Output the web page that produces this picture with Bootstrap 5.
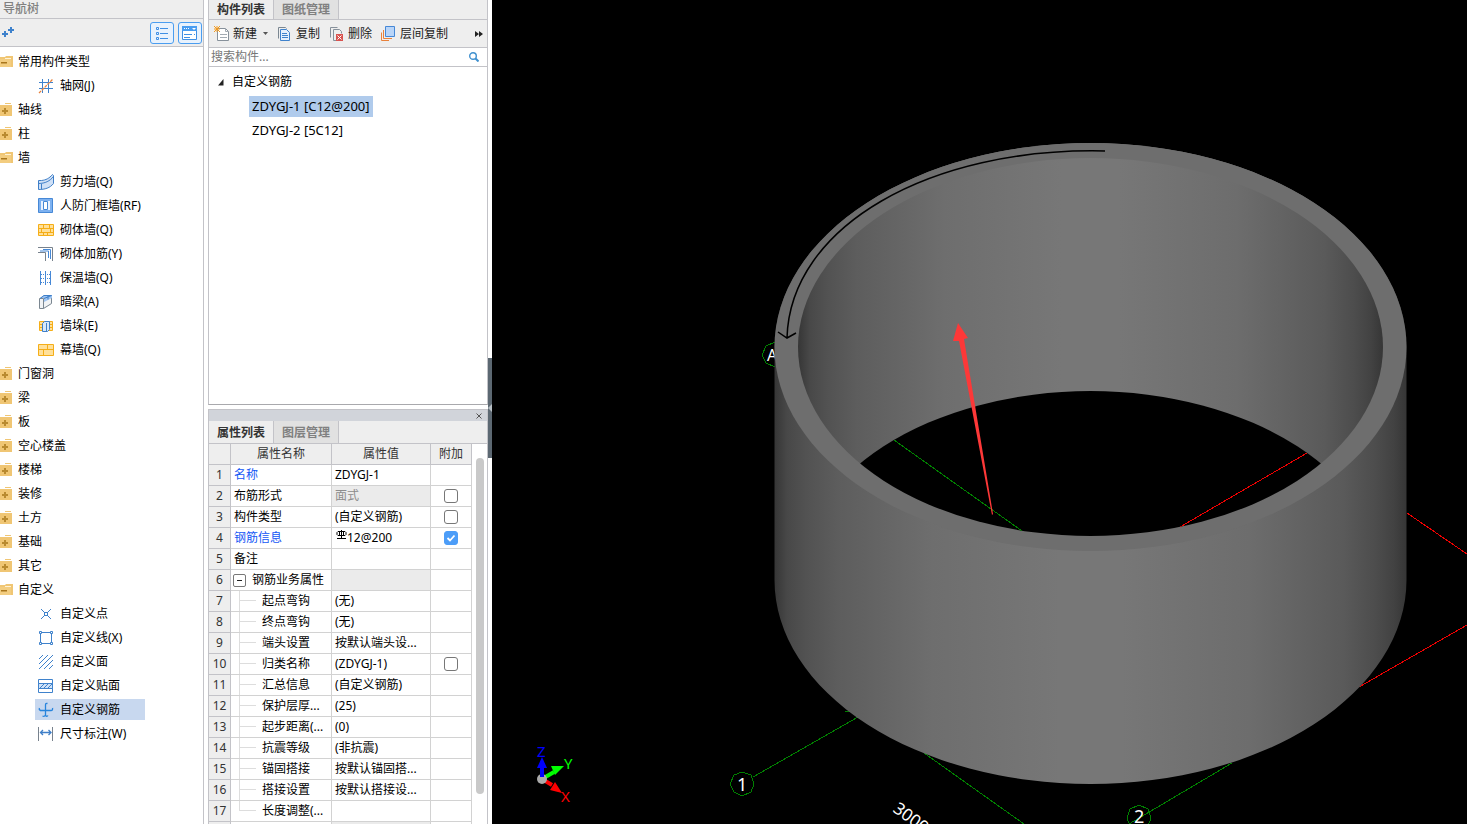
<!DOCTYPE html>
<html lang="zh-CN">
<head>
<meta charset="utf-8">
<meta name="viewport" content="width=device-width, initial-scale=1">
<title>自定义钢筋</title>
<link href="https://cdn.jsdelivr.net/npm/bootstrap@5.3.0/dist/css/bootstrap.min.css" rel="stylesheet">
<style>
:root { --line: #c3c3c8; --bar: #eee; }
body { font: 12px/20px "Noto Sans", "Noto Sans CJK SC", sans-serif; color: #000; background: #fff; }
svg { flex: none; }
a { color: inherit; text-decoration: none; }
button { font: inherit; }
.nav-panel { width: 204px; border-right: 1px solid var(--line); }
.mid-panel { width: 280px; }
.mid-panel > * { flex-shrink: 0; }
.bar { background: var(--bar); border-bottom: 1px solid var(--line); }
.panel-title { height: 19px; line-height: 17px; color: #808080; font-weight: 500; padding-left: 3px; }
.nav-tools { height: 28px; padding-right: 1px; }
.tool-toggle { width: 24px; height: 22px; border: 1px solid #4a9df0; border-radius: 3px; background: #e8f2fd; padding: 0; }
.tree-row { height: 24px; white-space: nowrap; }
.tree-row svg { display: block; }
.leaf { margin-left: 35px; height: 21px; padding: 0 25px 0 3px; gap: 6px; }
.leaf.active { background: #c8d8ef; }
.group { gap: 5px; height: 21px; }
.panel-tabs { background: var(--bar); border-bottom: 1px solid var(--line); }
.panel-tab { width: 65px; border: 0; border-right: 1px solid var(--line); padding: 0; background: #e1e1e1; color: #808080; font-weight: 700; }
.panel-tab.active { background: var(--bar); color: #333; }
.tabs-top { height: 20px; line-height: 17px; }
.tabs-low { height: 23px; line-height: 21px; }
.comp-tools { height: 28px; padding-left: 5px; gap: 9px; }
.tool-btn { border: 0; background: none; padding: 0; color: #222; gap: 3px; }
.search-row { height: 19px; border-bottom: 1px solid var(--line); }
.search-row input { border: 0; outline: 0; padding: 0 2px; font: inherit; height: 18px; width: 250px; }
.search-row input::placeholder { color: #777; opacity: 1; }
.boxed { border-left: 1px solid var(--line); border-right: 1px solid var(--line); }
.comp-list { height: 338px; border-bottom: 1px solid #a9a9ad; padding-top: 3px; }
.comp-item { margin-left: 40px; padding: 0 3px; height: 21px; font-size: 13px; }
.comp-item.active { background: #b0cbec; }
.dock-bar { height: 12px; margin-top: 4px; background: #d1d4da; border-top: 1px solid var(--line); }
.dock-bar button { border: 0; background: none; padding: 0; width: 16px; height: 11px; }
.props-box { flex: 1 1 0; min-height: 0; }
.props { width: 263px; table-layout: fixed; border-collapse: separate; border-spacing: 0; }
.props th, .props td { height: 21px; line-height: 20px; padding: 0 3px; font-weight: 400; border-right: 1px solid #d2d2d2; border-bottom: 1px solid #d2d2d2; overflow: hidden; white-space: nowrap; vertical-align: middle; }
.props thead th, .props tbody th { background: var(--bar); color: #333; text-align: center; border-color: var(--line); padding: 0; }
.props .key { color: #1457f5; }
.props .off { background: #ebebeb; color: #8c8c8c; }
.props .tick { text-align: center; }
.props input { appearance: none; display: block; margin: 0 auto; width: 14px; height: 14px; border: 1px solid #777; border-radius: 3px; background: #fff; }
.props input:checked { border-color: #4c9df8; background: #4c9df8 url("data:image/svg+xml,%3Csvg xmlns='http://www.w3.org/2000/svg' viewBox='0 0 12 12'%3E%3Cpath d='M2.5 6l2.5 2.5 4.500-5' fill='none' stroke='white' stroke-width='1.800'/%3E%3C/svg%3E"); }
.props .sub { padding: 0 0 0 31px; background: linear-gradient(#ddd, #ddd) 8px 0 / 1px 100% no-repeat, linear-gradient(#ddd, #ddd) 8px 9px / 17px 1px no-repeat; }
.props .sub.end { background-size: 1px 10px, 17px 1px; }
.props .parent { padding-left: 2px; }
.fold-row { gap: 6px; }
.fold { width: 13px; height: 13px; border: 1px solid #777; border-radius: 2px; background: #fff; padding: 0; }
.fold::before { content: ""; display: block; width: 5px; height: 1px; margin: 0 auto; background: #222; }
.scroll-rail { width: 8px; margin: 14px 3px 0 0; }
.scroll-thumb { height: 336px; border-radius: 4px; background: #c9c9c9; }
.splitter { width: 4px; }
.splitter-grip { height: 100px; background: #5c6872; }
.view-area { background: #000; min-width: 0; }
</style>
</head>
<body>
<svg class="d-none" xmlns="http://www.w3.org/2000/svg">
  <symbol id="f-open" viewBox="0 0 13 14"><path d="M0 2h5l1-1h7v11H0z" fill="#f0c674"/><path d="M5 3h6v2H5z" fill="#fff3d6"/><path d="M0 4h11v8H0z" fill="#f3cd80"/><path d="M1 7h6v1.500H1z" fill="#a9761c"/></symbol>
  <symbol id="f-shut" viewBox="0 0 13 14"><path d="M5 0h6v1H5zM0 2h12v11H0z" fill="#f0c674"/><path d="M5 5v6M2 8h6" stroke="#b98a30" stroke-width="2"/></symbol>
  <symbol id="i-grid" viewBox="0 0 16 16"><path d="M4.500 1v14M10.500 1v14M1 4.500h14M1 10.500h14" stroke="#3f82cc" fill="none"/><path d="M1 15L15 1" stroke="#e8813a" stroke-width="1.300" stroke-dasharray="3 1"/></symbol>
  <symbol id="i-shear" viewBox="0 0 16 16"><path d="M.5 6.500C6 7 10 5 14.500.5l1 1v8C12 14 7 15.500.5 15.500z" fill="#cfe0f6"/><path d="M3.500 6.500h-3v9C7 15.500 12 14 15.500 9.500v-8l-1-1C11 4.500 8 6 3.500 6.500zM.5 9.500C7 9.500 12 7 15.500 2.500M3.500 10v5" fill="none" stroke="#3f7fc8"/></symbol>
  <symbol id="i-frame" viewBox="0 0 16 16"><path d="M.5.5h14v14H.5z" fill="#7db1f0" stroke="#4688d6"/><path d="M3 3h9v9H3z" fill="#e8f2ff"/><path d="M5.500 3.500h4v8h-4z" fill="#fff" stroke="#4688d6"/></symbol>
  <symbol id="i-brick" viewBox="0 0 16 16"><path d="M.5 2.500h15v11H.5z" fill="#ffe09a" stroke="#f5ae18"/><path d="M0 6.500h16M0 10.500h16M5.500 2v4M11.500 2v4M3.500 7v3M12.500 7v3M5.500 10v4M9.500 10v4" stroke="#f5ae18"/></symbol>
  <symbol id="i-rebar" viewBox="0 0 16 16"><path d="M0 1.500h14.500V15M0 6.500h7.500V15" fill="none" stroke="#78828d"/><path d="M5 3.500h7.500V13M2 5h8.500V12" fill="none" stroke="#4688d6"/></symbol>
  <symbol id="i-insul" viewBox="0 0 16 16"><path d="M2.500 1v14M7.500 1v14M12.500 1v14" stroke="#4688d6"/><path d="M3 4.500h10M3 8.500h10M3 12.500h10" stroke="#4688d6" stroke-dasharray="1 1"/></symbol>
  <symbol id="i-beam" viewBox="0 0 16 16"><path d="M1.500 4.500l4-3h8v9l-7 4h-5z" fill="#f1f3f5"/><path d="M1.500 4.500h4v10h-4zM5.500 14.500l8-5v-8" fill="none" stroke="#7b8791"/><path d="M2 4l4-3h8v3l-8 4V4z" fill="#9fc5f2"/><path d="M2 4.500l4-3h7.500L6 4.500M10 1.500v4" fill="none" stroke="#3f7fc8"/></symbol>
  <symbol id="i-pier" viewBox="0 0 16 16"><path d="M1.500 3.500h13v9h-13z" fill="#ffe09a" stroke="#f5ae18"/><path d="M1 6.500h14M1 9.500h14" stroke="#f5ae18"/><path d="M4.500 5.500l2-2h5v8l-2 2h-5z" fill="#d7e8fc" stroke="#3f7fc8"/><path d="M8.500 5v8" stroke="#3f7fc8"/></symbol>
  <symbol id="i-curtain" viewBox="0 0 16 16"><path d="M.5 2.500h15v11H.5z" fill="#ffe09a" stroke="#f5ae18"/><path d="M0 7.500h16M9.500 2v5M5.500 8v5" stroke="#f5ae18"/></symbol>
  <symbol id="i-point" viewBox="0 0 16 16"><path d="M3 3l4 4M13 3L9 7M3 13l4-4M13 13L9 9M6.500 6.500h3v3h-3z" fill="none" stroke="#3f82cc"/></symbol>
  <symbol id="i-line" viewBox="0 0 16 16"><path d="M2.500 2.500h11v11h-11z" fill="none" stroke="#3f82cc"/><path d="M1.500 1.500h2v2h-2zM12.500 1.500h2v2h-2zM1.500 12.500h2v2h-2zM12.500 12.500h2v2h-2z" fill="#fff" stroke="#3f82cc"/></symbol>
  <symbol id="i-face" viewBox="0 0 16 16"><path d="M1 5l4-4M1 10l9-9M1 15L15 1M6 15l9-9M11 15l4-4" stroke="#3f82cc" fill="none"/></symbol>
  <symbol id="i-veneer" viewBox="0 0 16 16"><path d="M.5 1.500h14v13H.5z" fill="#fff" stroke="#3f82cc"/><path d="M.5 5.500h14v5H.5z" fill="#cfe2f8" stroke="#3f82cc"/><path d="M2 10l4-4M6 10l4-4M10 10l4-4" stroke="#3f82cc"/></symbol>
  <symbol id="i-steel" viewBox="0 0 16 16"><path d="M7.500 13V3q0-2 2-1.500M7.500 13q-1 2-3 1M3 8.500h10q2 0 1.500-2.500M3 8.500q-2.500-.5-1.500-2.500M3 8.500H2M10 13.500q-1 1.500-2.500 0" fill="none" stroke="#2784dc" stroke-width="1.300"/></symbol>
  <symbol id="i-size" viewBox="0 0 16 16"><path d="M.5 1v14M14.500 1v14" stroke="#78828d"/><path d="M3 6.500h10M5 4L2.500 6.500 5 9M10.500 4L13 6.500 10.500 9" fill="none" stroke="#3f7fc8" stroke-width="1.300"/></symbol>
</svg>

<div class="d-flex vh-100 overflow-hidden">
  <nav class="nav-panel flex-shrink-0" aria-label="导航树">
    <div class="bar panel-title">导航树</div>
    <div class="bar nav-tools d-flex align-items-center">
      <svg class="me-auto" width="16" height="14" viewBox="0 0 16 14"><path d="M5 5v6M2 8h6M11 1v6M8 4h6" stroke="#3f82cc" stroke-width="2"/></svg>
      <button class="tool-toggle d-flex align-items-center justify-content-center me-1" aria-label="列表"><svg width="14" height="14" viewBox="0 0 14 14"><path d="M1.500 1.500h2v2h-2zM1.500 6.500h2v2h-2zM1.500 11.500h2v2h-2zM5 2.500h8M5 7.500h8M5 12.500h8" fill="none" stroke="#3f8fe4"/></svg></button>
      <button class="tool-toggle d-flex align-items-center justify-content-center" aria-label="窗口"><svg width="16" height="14" viewBox="0 0 16 14"><path d="M.5.5h14v13H.5z" fill="#fff" stroke="#3f8fe4"/><path d="M0 0h15v5H0z" fill="#4a9df0"/><path d="M2 2.500h5" stroke="#fff" stroke-dasharray="1 1"/><path d="M10 2h4l-2 2z" fill="#fff"/><path d="M2 8.500h8M2 11.500h6M12 8.500h1" stroke="#3f8fe4"/></svg></button>
    </div>
    <ul class="list-unstyled mb-0 pt-1">
      <li class="tree-row"><a href="#" class="group d-flex align-items-center"><svg width="13" height="14"><use href="#f-open"/></svg>常用构件类型</a></li>
      <li class="tree-row d-flex"><a href="#" class="leaf d-flex align-items-center"><svg width="16" height="16"><use href="#i-grid"/></svg>轴网(J)</a></li>
      <li class="tree-row"><a href="#" class="group d-flex align-items-center"><svg width="13" height="14"><use href="#f-shut"/></svg>轴线</a></li>
      <li class="tree-row"><a href="#" class="group d-flex align-items-center"><svg width="13" height="14"><use href="#f-shut"/></svg>柱</a></li>
      <li class="tree-row"><a href="#" class="group d-flex align-items-center"><svg width="13" height="14"><use href="#f-open"/></svg>墙</a></li>
      <li class="tree-row d-flex"><a href="#" class="leaf d-flex align-items-center"><svg width="16" height="16"><use href="#i-shear"/></svg>剪力墙(Q)</a></li>
      <li class="tree-row d-flex"><a href="#" class="leaf d-flex align-items-center"><svg width="16" height="16"><use href="#i-frame"/></svg>人防门框墙(RF)</a></li>
      <li class="tree-row d-flex"><a href="#" class="leaf d-flex align-items-center"><svg width="16" height="16"><use href="#i-brick"/></svg>砌体墙(Q)</a></li>
      <li class="tree-row d-flex"><a href="#" class="leaf d-flex align-items-center"><svg width="16" height="16"><use href="#i-rebar"/></svg>砌体加筋(Y)</a></li>
      <li class="tree-row d-flex"><a href="#" class="leaf d-flex align-items-center"><svg width="16" height="16"><use href="#i-insul"/></svg>保温墙(Q)</a></li>
      <li class="tree-row d-flex"><a href="#" class="leaf d-flex align-items-center"><svg width="16" height="16"><use href="#i-beam"/></svg>暗梁(A)</a></li>
      <li class="tree-row d-flex"><a href="#" class="leaf d-flex align-items-center"><svg width="16" height="16"><use href="#i-pier"/></svg>墙垛(E)</a></li>
      <li class="tree-row d-flex"><a href="#" class="leaf d-flex align-items-center"><svg width="16" height="16"><use href="#i-curtain"/></svg>幕墙(Q)</a></li>
      <li class="tree-row"><a href="#" class="group d-flex align-items-center"><svg width="13" height="14"><use href="#f-shut"/></svg>门窗洞</a></li>
      <li class="tree-row"><a href="#" class="group d-flex align-items-center"><svg width="13" height="14"><use href="#f-shut"/></svg>梁</a></li>
      <li class="tree-row"><a href="#" class="group d-flex align-items-center"><svg width="13" height="14"><use href="#f-shut"/></svg>板</a></li>
      <li class="tree-row"><a href="#" class="group d-flex align-items-center"><svg width="13" height="14"><use href="#f-shut"/></svg>空心楼盖</a></li>
      <li class="tree-row"><a href="#" class="group d-flex align-items-center"><svg width="13" height="14"><use href="#f-shut"/></svg>楼梯</a></li>
      <li class="tree-row"><a href="#" class="group d-flex align-items-center"><svg width="13" height="14"><use href="#f-shut"/></svg>装修</a></li>
      <li class="tree-row"><a href="#" class="group d-flex align-items-center"><svg width="13" height="14"><use href="#f-shut"/></svg>土方</a></li>
      <li class="tree-row"><a href="#" class="group d-flex align-items-center"><svg width="13" height="14"><use href="#f-shut"/></svg>基础</a></li>
      <li class="tree-row"><a href="#" class="group d-flex align-items-center"><svg width="13" height="14"><use href="#f-shut"/></svg>其它</a></li>
      <li class="tree-row"><a href="#" class="group d-flex align-items-center"><svg width="13" height="14"><use href="#f-open"/></svg>自定义</a></li>
      <li class="tree-row d-flex"><a href="#" class="leaf d-flex align-items-center"><svg width="16" height="16"><use href="#i-point"/></svg>自定义点</a></li>
      <li class="tree-row d-flex"><a href="#" class="leaf d-flex align-items-center"><svg width="16" height="16"><use href="#i-line"/></svg>自定义线(X)</a></li>
      <li class="tree-row d-flex"><a href="#" class="leaf d-flex align-items-center"><svg width="16" height="16"><use href="#i-face"/></svg>自定义面</a></li>
      <li class="tree-row d-flex"><a href="#" class="leaf d-flex align-items-center"><svg width="16" height="16"><use href="#i-veneer"/></svg>自定义贴面</a></li>
      <li class="tree-row d-flex"><a href="#" class="leaf active d-flex align-items-center"><svg width="16" height="16"><use href="#i-steel"/></svg>自定义钢筋</a></li>
      <li class="tree-row d-flex"><a href="#" class="leaf d-flex align-items-center"><svg width="16" height="16"><use href="#i-size"/></svg>尺寸标注(W)</a></li>
    </ul>
  </nav>

  <section class="mid-panel flex-shrink-0 ms-1 d-flex flex-column">
    <div class="panel-tabs tabs-top boxed d-flex"><button class="panel-tab active">构件列表</button><button class="panel-tab">图纸管理</button></div>
    <div class="bar boxed comp-tools d-flex align-items-center">
      <button class="tool-btn d-flex align-items-center"><svg width="16" height="16" viewBox="0 0 16 16"><path d="M3.500 2.500h8l3 3v9h-11z" fill="#fff" stroke="#87919b"/><path d="M11.500 2.500v3h3M6 8.500h7M6 11.500h7" fill="none" stroke="#a3abb3"/><path d="M0 0l6 6M6 0L0 6M3 0v6M0 3h6" stroke="#f29a1f"/></svg>新建<svg width="8" height="4" viewBox="0 0 8 4"><path d="M3 0h5L5.500 3z" fill="#555"/></svg></button>
      <button class="tool-btn d-flex align-items-center"><svg width="16" height="16" viewBox="0 0 16 16"><path d="M1.500 12.500V1.500h7l1 1" fill="none" stroke="#7b8791"/><path d="M3.500 3.500h6l3 3v8h-9z" fill="#e5f0fd" stroke="#3f82cc"/><path d="M5 7.500h5M5 9.500h6M5 11.500h6" stroke="#3f82cc"/></svg>复制</button>
      <button class="tool-btn d-flex align-items-center"><svg width="16" height="16" viewBox="0 0 16 16"><path d="M1.500 11.500V1.500h7M4.500 14.500v-11h6l2 2v2" fill="none" stroke="#87919b"/><path d="M4.500 14.500H8" stroke="#87919b"/><path d="M7 8h7v7H7z" fill="#d9534f"/><path d="M8.500 9.500l4 4M12.500 9.500l-4 4" stroke="#fff"/></svg>删除</button>
      <button class="tool-btn d-flex align-items-center"><svg width="16" height="16" viewBox="0 0 16 16"><path d="M4.500.5h9v10h-9z" fill="#b9d5f8" stroke="#4688d6"/><path d="M2.500 4v8.500H11M.5 6.500v8H8" fill="none" stroke="#e8813a"/></svg>层间复制</button>
      <button class="tool-btn ms-auto me-1" aria-label="更多"><svg class="d-block" width="8" height="6" viewBox="0 0 8 6"><path d="M0 0l4 3-4 3zM4 0l4 3-4 3z" fill="#222"/></svg></button>
    </div>
    <div class="search-row boxed d-flex align-items-center"><input type="text" placeholder="搜索构件..." aria-label="搜索构件"><svg class="ms-auto me-2" width="10" height="10" viewBox="0 0 10 10"><circle cx="4" cy="4" r="3.300" fill="none" stroke="#3f90cf" stroke-width="1.400"/><path d="M6.500 6.500L9.500 9.500" stroke="#3f90cf" stroke-width="2"/></svg></div>
    <ul class="comp-list boxed list-unstyled mb-0">
      <li class="tree-row d-flex align-items-center"><svg class="ms-2 me-2" width="7" height="7" viewBox="0 0 7 7"><path d="M6.500 0v6.500H1z" fill="#222"/></svg>自定义钢筋</li>
      <li class="tree-row d-flex align-items-center"><a href="#" class="comp-item active">ZDYGJ-1 [C12@200]</a></li>
      <li class="tree-row d-flex align-items-center"><a href="#" class="comp-item">ZDYGJ-2 [5C12]</a></li>
    </ul>
    <div class="dock-bar boxed d-flex justify-content-end"><button class="d-flex align-items-center justify-content-center" aria-label="关闭"><svg width="6" height="6" viewBox="0 0 6 6"><path d="M.5.5l5 5M5.500.5l-5 5" stroke="#555"/></svg></button></div>
    <div class="panel-tabs tabs-low boxed d-flex"><button class="panel-tab active">属性列表</button><button class="panel-tab">图层管理</button></div>
    <div class="props-box boxed d-flex overflow-hidden justify-content-between align-items-start">
      <table class="props">
        <colgroup><col style="width:22px"><col style="width:101px"><col style="width:99px"><col style="width:41px"></colgroup>
        <thead><tr><th></th><th scope="col">属性名称</th><th scope="col">属性值</th><th scope="col">附加</th></tr></thead>
        <tbody>
          <tr><th>1</th><td class="key">名称</td><td>ZDYGJ-1</td><td></td></tr>
          <tr><th>2</th><td>布筋形式</td><td class="off">面式</td><td class="tick"><input type="checkbox" aria-label="布筋形式"></td></tr>
          <tr><th>3</th><td>构件类型</td><td>(自定义钢筋)</td><td class="tick"><input type="checkbox" aria-label="构件类型"></td></tr>
          <tr><th>4</th><td class="key">钢筋信息</td><td><div class="d-flex"><svg width="12" height="14" viewBox="0 0 12 14"><path d="M6.500 2v9M2 10.500h9M4.500 3.500v4M8.500 3.500v4M3 3.500h7l1 1v2l-1 1H3l-1-1v-2z" fill="none" stroke="#000"/></svg>12@200</div></td><td class="tick"><input type="checkbox" checked aria-label="钢筋信息"></td></tr>
          <tr><th>5</th><td>备注</td><td></td><td></td></tr>
          <tr><th>6</th><td class="parent"><div class="fold-row d-flex align-items-center"><button class="fold" aria-label="折叠"></button>钢筋业务属性</div></td><td class="off"></td><td></td></tr>
          <tr><th>7</th><td class="sub">起点弯钩</td><td>(无)</td><td></td></tr>
          <tr><th>8</th><td class="sub">终点弯钩</td><td>(无)</td><td></td></tr>
          <tr><th>9</th><td class="sub">端头设置</td><td>按默认端头设...</td><td></td></tr>
          <tr><th>10</th><td class="sub">归类名称</td><td>(ZDYGJ-1)</td><td class="tick"><input type="checkbox" aria-label="归类名称"></td></tr>
          <tr><th>11</th><td class="sub">汇总信息</td><td>(自定义钢筋)</td><td></td></tr>
          <tr><th>12</th><td class="sub">保护层厚...</td><td>(25)</td><td></td></tr>
          <tr><th>13</th><td class="sub">起步距离(...</td><td>(0)</td><td></td></tr>
          <tr><th>14</th><td class="sub">抗震等级</td><td>(非抗震)</td><td></td></tr>
          <tr><th>15</th><td class="sub">锚固搭接</td><td>按默认锚固搭...</td><td></td></tr>
          <tr><th>16</th><td class="sub">搭接设置</td><td>按默认搭接设...</td><td></td></tr>
          <tr><th>17</th><td class="sub end">长度调整(...</td><td></td><td></td></tr>
          <tr><th></th><td></td><td class="off"></td><td></td></tr>
        </tbody>
      </table>
      <div class="scroll-rail"><div class="scroll-thumb"></div></div>
    </div>
  </section>

  <div class="splitter flex-shrink-0 d-flex flex-column justify-content-center pb-2"><div class="splitter-grip"><svg class="d-block" width="4" height="100" viewBox="0 0 4 100"><path d="M4 46v8L0 50z" fill="#b8c0c6"/></svg></div></div>

  <main class="view-area flex-fill">
    <svg class="d-block w-100 h-100" viewBox="492 0 975 824" preserveAspectRatio="xMidYMid slice" font-family="Noto Sans, sans-serif">
      <defs>
        <linearGradient id="wall"><stop offset="0" stop-color="#363636"/><stop offset=".02" stop-color="#484848"/><stop offset=".05" stop-color="#525252"/><stop offset=".1" stop-color="#5d5d5d"/><stop offset=".25" stop-color="#6e6e6e"/><stop offset=".45" stop-color="#777"/><stop offset=".55" stop-color="#777"/><stop offset=".75" stop-color="#6d6d6d"/><stop offset=".9" stop-color="#5a5a5a"/><stop offset=".95" stop-color="#4d4d4d"/><stop offset=".98" stop-color="#424242"/><stop offset="1" stop-color="#363636"/></linearGradient>
        <clipPath id="bore"><ellipse cx="1090.500" cy="347" rx="292.500" ry="189"/></clipPath>
      </defs>
      <g fill="none" stroke="#008000" shape-rendering="crispEdges">
        <path d="M753 777L858 717M845 711h5M924 753l100 71M1129 824l103-61"/>
        <path d="M742 772l9 3 3 9-3 8-9 4-8-4-4-8 4-9zM1139 805l9 4 3 9-3 8-9 4-9-4-3-8 3-9zM775 342l-9 4-4 9 4 8 9 4"/>
      </g>
      <path d="M1407 513l60 41M1467 625l-108 62" stroke="#f00000" fill="none" shape-rendering="crispEdges"/>
      <g fill="#fff"><text x="737" y="791" font-size="18">1</text><text x="1134" y="823" font-size="18">2</text><text x="767" y="361" font-size="16">A</text><text transform="translate(892 811) rotate(36)" font-size="17">3000</text></g>
      <path d="M774.500 347A316 204 0 0 1 1406.500 347V580A316 204 0 0 1 774.500 580z" fill="url(#wall)"/>
      <ellipse cx="1090.500" cy="347" rx="316" ry="204" fill="#6e6e6e"/>
      <ellipse cx="1090.500" cy="347" rx="292.500" ry="189" fill="url(#wall)"/>
      <g clip-path="url(#bore)"><ellipse cx="1090.500" cy="580" rx="292.500" ry="189" fill="#000"/><g shape-rendering="crispEdges"><path d="M894 440l128 91" stroke="#008000"/><path d="M1307 453l-127 74" stroke="#f00000"/></g></g>
      <path d="M1105 151C930 147 790 226 787 338M778 332l9 6 9-5" fill="none" stroke="#000" stroke-width="1.500"/>
      <path d="M958 323l10 15-4 1 29 175-1 1-33-174-6 0z" fill="#fd3838"/>
      <g><path d="M542 779l12-7" stroke="#0f0" stroke-width="4"/><path d="M551 766l13 0-9 9z" fill="#0f0"/><path d="M542 779l10 6" stroke="#f00" stroke-width="4"/><path d="M555 782l7 11-12-3z" fill="#f00"/><circle cx="542" cy="779" r="5" fill="#aaa"/><path d="M542 777v-9" stroke="#00f" stroke-width="4"/><path d="M542 757l5 11h-10z" fill="#00f"/>
      <g font-size="15"><text x="537" y="757" fill="#00f">Z</text><text x="564" y="769" fill="#0f0">Y</text><text x="561" y="802" fill="#f00">X</text></g></g>
    </svg>
  </main>
</div>
<script src="https://cdn.jsdelivr.net/npm/bootstrap@5.3.0/dist/js/bootstrap.bundle.min.js"></script>
</body>
</html>
